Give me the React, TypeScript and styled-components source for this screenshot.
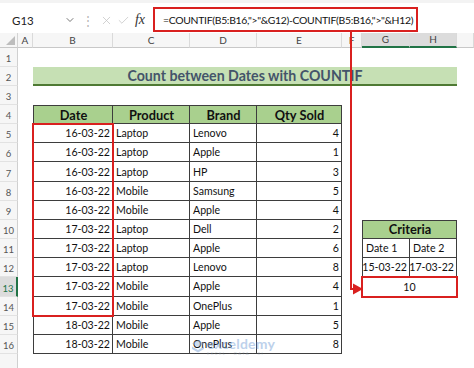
import React from "react";
import styled, { createGlobalStyle, css } from "styled-components";
import { ChevronDown, X, Check } from "lucide-react";

const GlobalStyle = createGlobalStyle`
  html, body { margin: 0; padding: 0; background: #fff; }
  body { font-family: Lato, "Liberation Sans", sans-serif; }
`;

const RED = "#d9201f";
const LINE = "#3d3d3d";

const Window = styled.div`
  position: relative;
  width: 474px;
  height: 368px;
  overflow: hidden;
  background: #fff;
`;

const FormulaBar = styled.div`
  height: 33px;
  box-sizing: border-box;
  display: flex;
  align-items: flex-end;
  padding-bottom: 1px;
  border-top: 3px solid #f3f3f3;
`;

const NameBox = styled.div`
  width: 82px;
  height: 24px;
  box-sizing: border-box;
  display: flex;
  align-items: center;
  justify-content: space-between;
  padding: 0 6px 0 12px;
  font-size: 11.5px;
  color: #222;
`;

const Dots = styled.div`
  width: 12px;
  height: 24px;
  display: flex;
  align-items: center;
  justify-content: center;
  color: #b5b5b5;
  font-size: 12px;
`;

const IconSlot = styled.div<{ $first?: boolean }>`
  width: 17px;
  height: 24px;
  display: flex;
  align-items: center;
  justify-content: center;
  margin-left: ${(p) => (p.$first ? "3.5px" : "0")};
  color: #c4c4c4;
`;

const Fx = styled.span`
  font-family: "Liberation Serif", serif;
  font-style: italic;
  font-size: 14px;
  color: #333;
`;

const FormulaInput = styled.div`
  margin-left: 4.5px;
  width: 265px;
  height: 25px;
  box-sizing: border-box;
  border: 2px solid ${RED};
  display: flex;
  align-items: center;
  padding-left: 8px;
  font-size: 10.4px;
  letter-spacing: -0.3px;
  color: #111;
  white-space: nowrap;
  overflow: hidden;
`;

const Sheet = styled.div`
  display: grid;
  grid-template-columns: 18px 15px 80px 77px 67px 85px 20px 48px 47px 1fr;
  grid-template-rows: 14.5px repeat(17, 19.17px);
`;

type Pos = { $c: string | number; $r: string | number };

const placed = css<Pos>`
  grid-column: ${(p) => p.$c};
  grid-row: ${(p) => p.$r};
  box-sizing: border-box;
`;

const Corner = styled.div<Pos>`
  ${placed}
  position: relative;
  background: #f6f6f6;
  border-right: 1px solid #d4d4d4;
  border-bottom: 1px solid #c8c8c8;
  &::after {
    content: "";
    position: absolute;
    right: 2px;
    bottom: 2px;
    border-style: solid;
    border-width: 0 0 9px 9px;
    border-color: transparent transparent #bdbdbd transparent;
  }
`;

const ColHeader = styled.div<Pos & { $sel?: boolean }>`
  ${placed}
  display: flex;
  align-items: center;
  justify-content: center;
  font-size: 10px;
  color: #444;
  background: ${(p) => (p.$sel ? "#dcdcdc" : "#f6f6f6")};
  border-right: 1px solid #dadada;
  border-bottom: ${(p) => (p.$sel ? "2px solid #217346" : "1px solid #c8c8c8")};
`;

const RowHeader = styled.div<Pos & { $sel?: boolean }>`
  ${placed}
  display: flex;
  align-items: flex-end;
  justify-content: center;
  padding-bottom: 2px;
  font-size: 9.5px;
  color: ${(p) => (p.$sel ? "#217346" : "#555")};
  background: ${(p) => (p.$sel ? "#dcdcdc" : "#f6f6f6")};
  border-bottom: 1px solid #e2e2e2;
  border-right: ${(p) => (p.$sel ? "2px solid #217346" : "1px solid #d0d0d0")};
`;

const Title = styled.div<Pos>`
  ${placed}
  display: flex;
  align-items: center;
  justify-content: center;
  background: #c6e0b4;
  border-bottom: 2.5px solid #4f7a34;
  font-weight: 700;
  font-size: 14.2px;
  color: #44546a;
`;

type CellProps = Pos & {
  $head?: boolean;
  $align?: "left" | "right" | "center";
  $top?: boolean;
  $left?: boolean;
};

const Cell = styled.div<CellProps>`
  ${placed}
  display: flex;
  align-items: center;
  justify-content: ${(p) =>
    p.$align === "right" ? "flex-end" : p.$align === "left" ? "flex-start" : "center"};
  padding: 0 2px 0 3px;
  white-space: nowrap;
  color: #111;
  font-size: ${(p) => (p.$head ? "12.8px" : "10.6px")};
  font-weight: ${(p) => (p.$head ? 700 : 400)};
  background: ${(p) => (p.$head ? "#a9d08e" : "#fff")};
  border-right: 1px solid ${LINE};
  border-bottom: 1px solid ${LINE};
  border-top: ${(p) => (p.$top ? `1px solid ${LINE}` : "none")};
  border-left: ${(p) => (p.$left ? `1px solid ${LINE}` : "none")};
`;

const ResultCell = styled.div<Pos>`
  ${placed}
  margin: -1px;
  display: flex;
  align-items: center;
  justify-content: center;
  font-size: 10.6px;
  color: #111;
  background: #fff;
  border: 2px solid ${RED};
  z-index: 2;
`;

const Highlight = styled.div<Pos>`
  ${placed}
  margin: -1px;
  border: 2px solid ${RED};
  z-index: 2;
  pointer-events: none;
`;

const Overlay = styled.svg`
  position: absolute;
  left: 0;
  top: 0;
  z-index: 3;
  pointer-events: none;
`;

const Watermark = styled.div`
  position: absolute;
  left: 191px;
  top: 337px;
  display: flex;
  align-items: center;
  gap: 2px;
  opacity: 0.45;
  z-index: 4;
  pointer-events: none;
`;

const WmText = styled.div`
  display: flex;
  flex-direction: column;
  line-height: 1;
  span:first-child {
    font-size: 14px;
    font-weight: 700;
    color: #6f9bd4;
    letter-spacing: 0.2px;
  }
  span:last-child {
    font-size: 4px;
    color: #8a9bb0;
    letter-spacing: 1.5px;
    margin-top: 1px;
  }
`;

const cols = ["A", "B", "C", "D", "E", "F", "G", "H", ""];

const data: [string, string, string, number][] = [
  ["16-03-22", "Laptop", "Lenovo", 4],
  ["16-03-22", "Laptop", "Apple", 1],
  ["16-03-22", "Laptop", "HP", 3],
  ["16-03-22", "Mobile", "Samsung", 5],
  ["16-03-22", "Mobile", "Apple", 4],
  ["17-03-22", "Laptop", "Dell", 2],
  ["17-03-22", "Laptop", "Apple", 6],
  ["17-03-22", "Laptop", "Lenovo", 8],
  ["17-03-22", "Mobile", "Apple", 4],
  ["17-03-22", "Mobile", "OnePlus", 1],
  ["18-03-22", "Mobile", "Apple", 5],
  ["18-03-22", "Mobile", "OnePlus", 8],
];

export default function App() {
  return (
    <Window>
      <GlobalStyle />
      <FormulaBar>
        <NameBox>
          <span>G13</span>
          <ChevronDown size={12} color="#555" strokeWidth={1.6} />
        </NameBox>
        <Dots>⋮</Dots>
        <IconSlot $first>
          <X size={13} strokeWidth={1.4} />
        </IconSlot>
        <IconSlot>
          <Check size={13} strokeWidth={1.4} />
        </IconSlot>
        <IconSlot>
          <Fx>fx</Fx>
        </IconSlot>
        <FormulaInput>=COUNTIF(B5:B16,"&gt;"&amp;G12)-COUNTIF(B5:B16,"&gt;"&amp;H12)</FormulaInput>
      </FormulaBar>

      <Sheet>
        <Corner $c={1} $r={1} />
        {cols.map((c, i) => (
          <ColHeader key={i} $c={i + 2} $r={1} $sel={c === "G" || c === "H"}>
            {c}
          </ColHeader>
        ))}
        {Array.from({ length: 17 }, (_, i) => (
          <RowHeader key={i} $c={1} $r={i + 2} $sel={i + 1 === 13}>
            {i < 16 ? i + 1 : ""}
          </RowHeader>
        ))}

        <Title $c="3 / 10" $r={3}>Count between Dates with COUNTIF</Title>

        {["Date", "Product", "Brand", "Qty Sold"].map((h, i) => (
          <Cell key={h} $c={i + 3} $r={5} $head $top $left={i === 0}>
            {h}
          </Cell>
        ))}
        {data.map((row, r) => (
          <React.Fragment key={r}>
            <Cell $c={3} $r={r + 6} $align="right" $left>{row[0]}</Cell>
            <Cell $c={4} $r={r + 6} $align="left">{row[1]}</Cell>
            <Cell $c={5} $r={r + 6} $align="left">{row[2]}</Cell>
            <Cell $c={6} $r={r + 6} $align="right">{row[3]}</Cell>
          </React.Fragment>
        ))}
        <Highlight $c={3} $r="6 / 16" />

        <Cell $c="8 / 10" $r={11} $head $top $left>Criteria</Cell>
        <Cell $c={8} $r={12} $align="left" $left>Date 1</Cell>
        <Cell $c={9} $r={12} $align="left">Date 2</Cell>
        <Cell $c={8} $r={13} $align="right" $left>15-03-22</Cell>
        <Cell $c={9} $r={13} $align="right">17-03-22</Cell>
        <ResultCell $c="8 / 10" $r={14}>10</ResultCell>
      </Sheet>

      <Overlay width={474} height={368} viewBox="0 0 474 368">
        <path d="M351 32 V289 H355" fill="none" stroke={RED} strokeWidth={2} />
        <polygon points="353,283.5 363,289 353,294.5" fill={RED} />
      </Overlay>

      <Watermark>
        <svg width="14" height="16" viewBox="0 0 14 16">
          <path d="M7 1 L13 4.5 L7 8 L1 4.5 Z" fill="#8fb0dc" />
          <path d="M1 7.5 L7 11 L13 7.5 L13 10 L7 13.5 L1 10 Z" fill="#6f9bd4" />
        </svg>
        <WmText>
          <span>exceldemy</span>
          <span>EXCEL · DATA · BI</span>
        </WmText>
      </Watermark>
    </Window>
  );
}
